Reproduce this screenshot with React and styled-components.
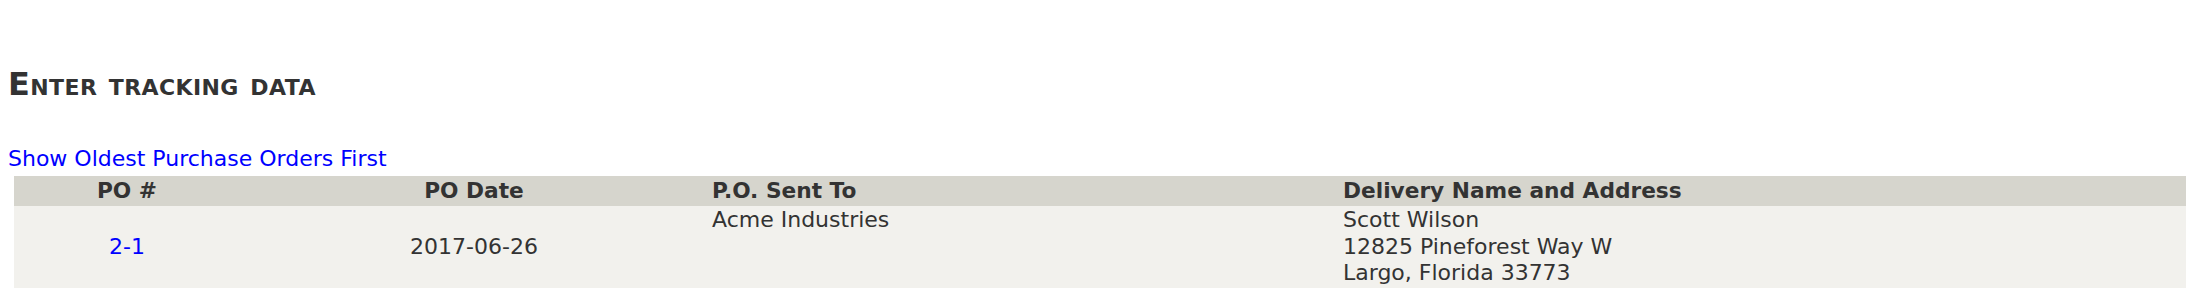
import React from "react";
import styled, { createGlobalStyle } from "styled-components";

const Global = createGlobalStyle`
  html, body { margin: 0; padding: 0; background: #ffffff; }
  body { font-family: "DejaVu Sans", Verdana, sans-serif; color: #333333; }
  #root { padding: 0 8px; }
`;

const Page = styled.div`
  display: flex;
  flex-direction: column;
  align-items: flex-start;
`;

const Heading = styled.h2`
  margin: 65px 0 0;
  font-family: "DejaVu Sans", Verdana, sans-serif;
  font-size: 32px;
  font-weight: bold;
  font-variant: small-caps;
  letter-spacing: 0.4px;
  line-height: normal;
  color: #333333;
`;

const SortLink = styled.a`
  margin-top: 43px;
  font-size: 22px;
  line-height: normal;
  color: #0000ff;
  text-decoration: none;
  cursor: pointer;
`;

const Table = styled.table`
  margin: 5px 0 0 6px;
  width: 2172px;
  border-collapse: collapse;
  table-layout: fixed;
`;

const HeadCell = styled.th`
  height: 30px;
  padding: 0 4px;
  background: #d6d5cd;
  font-size: 21.7px;
  font-weight: bold;
  line-height: 24px;
  color: #333333;
  text-align: ${(p) => p.$align || "left"};
  white-space: nowrap;
`;

const Cell = styled.td`
  padding: 1px 4px;
  background: #f2f1ed;
  font-size: 22px;
  line-height: 26.7px;
  color: #333333;
  text-align: ${(p) => p.$align || "left"};
  vertical-align: ${(p) => p.$valign || "middle"};
`;

const PoLink = styled.a`
  color: #0000ff;
  text-decoration: none;
  cursor: pointer;
`;

const Line = styled.div``;

export default function App() {
  return (
    <>
      <Global />
      <Page>
        <Heading>Enter tracking data</Heading>
        <SortLink>Show Oldest Purchase Orders First</SortLink>
        <Table>
          <colgroup>
            <col style={{ width: "226px" }} />
            <col style={{ width: "468px" }} />
            <col style={{ width: "631px" }} />
            <col />
          </colgroup>
          <thead>
            <tr>
              <HeadCell $align="center">PO #</HeadCell>
              <HeadCell $align="center">PO Date</HeadCell>
              <HeadCell>P.O. Sent To</HeadCell>
              <HeadCell>Delivery Name and Address</HeadCell>
            </tr>
          </thead>
          <tbody>
            <tr>
              <Cell $align="center">
                <PoLink>2-1</PoLink>
              </Cell>
              <Cell $align="center">2017-06-26</Cell>
              <Cell $valign="top">Acme Industries</Cell>
              <Cell $valign="top">
                <Line>Scott Wilson</Line>
                <Line>12825 Pineforest Way W</Line>
                <Line>Largo, Florida 33773</Line>
              </Cell>
            </tr>
          </tbody>
        </Table>
      </Page>
    </>
  );
}
